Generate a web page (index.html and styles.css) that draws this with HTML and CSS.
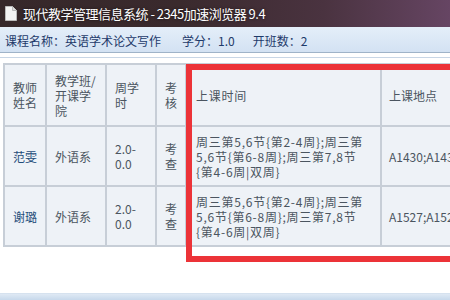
FILE: index.html
```html
<!DOCTYPE html>
<html>
<head>
<meta charset="utf-8">
<link rel="stylesheet" href="styles.css">
</head>
<body>
<div class="titlebar">
  <svg class="doc-icon" width="12" height="15" viewBox="0 0 12 15"><path d="M0.5 0.5h7l4 4v10h-11z" fill="#f4f4f4" stroke="#bbb"/><path d="M7.5 0.5v4h4" fill="#ddd" stroke="#bbb"/></svg>
  <span class="title">现代教学管理信息系统 - 2345加速浏览器 9.4</span>
</div>
<div class="infobar">
  <span>课程名称：英语学术论文写作</span>
  <span class="credit">学分：1.0</span>
  <span class="classes">开班数：2</span>
</div>
<div class="content">
  <div class="table-wrap">
    <table class="grid">
      <colgroup>
        <col class="c1"><col class="c2"><col class="c3"><col class="c4"><col class="c5"><col class="c6">
      </colgroup>
      <tr class="head">
        <td>教师姓名</td>
        <td>教学班/开课学院</td>
        <td>周学时</td>
        <td>考核</td>
        <td class="time">上课时间</td>
        <td class="place">上课地点</td>
      </tr>
      <tr class="row">
        <td class="link">范雯</td>
        <td>外语系</td>
        <td>2.0-0.0</td>
        <td>考查</td>
        <td class="time">周三第5,6节{第2-4周};周三第5,6节{第6-8周};周三第7,8节{第4-6周|双周}</td>
        <td class="place">A1430;A1430;A1430</td>
      </tr>
      <tr class="row">
        <td class="link">谢璐</td>
        <td>外语系</td>
        <td>2.0-0.0</td>
        <td>考查</td>
        <td class="time">周三第5,6节{第2-4周};周三第5,6节{第6-8周};周三第7,8节{第4-6周|双周}</td>
        <td class="place">A1527;A1527;A1527</td>
      </tr>
    </table>
    <div class="highlight"></div>
  </div>
</div>
<div class="bottombar"></div>
</body>
</html>
```

FILE: styles.css
```css
html, body {
  margin: 0;
  padding: 0;
  width: 450px;
  height: 300px;
  overflow: hidden;
  background: #fff;
  font-family: "Noto Sans CJK SC", "Noto Sans", sans-serif;
}
.titlebar {
  height: 27px;
  display: flex;
  align-items: center;
  padding-left: 5px;
  background: linear-gradient(90deg, #36282a 0%, #3a2a2d 40%, #4a3340 72%, #664563 100%);
  color: #fff;
  box-sizing: border-box;
}
.doc-icon {
  flex: none;
  margin-right: 6px;
}
.title {
  font-size: 13px;
  letter-spacing: -0.5px;
  text-shadow: 0 0 3px rgba(0,0,0,0.6);
  white-space: nowrap;
}
.infobar {
  height: 26px;
  box-sizing: border-box;
  display: flex;
  align-items: center;
  padding-left: 5px;
  padding-top: 2px;
  font-size: 12px;
  color: #1e3a6a;
  background: linear-gradient(180deg, #e4eef9 0%, #d3e2f3 100%);
  border-bottom: 1px solid #9fb3c8;
  white-space: nowrap;
}
.credit { margin-left: 21px; }
.classes { margin-left: 18px; }
.content {
  border-top: 1px solid #ffffff;
  padding-top: 3px;
}
.table-wrap {
  position: relative;
  border-top: 1px solid #c8d6e6;
  padding-top: 5px;
  padding-left: 3px;
  height: 225px;
  overflow: hidden;
}
.grid {
  border-collapse: collapse;
  table-layout: fixed;
  width: 520px;
  font-size: 12px;
  line-height: 15px;
  color: #4b5560;
}
.c1 { width: 42px; }
.c2 { width: 60px; }
.c3 { width: 50px; }
.c4 { width: 30px; }
.c5 { width: 195px; }
.c6 { width: 143px; }
.grid td {
  border: 2px solid #c7ced7;
  background: #eef2f7;
  padding: 0 6px 0 8px;
  vertical-align: middle;
  word-break: break-all;
}
.grid td:nth-child(3) { word-break: normal; padding-right: 10px; }
.head td { height: 60px; }
.row td { height: 58px; }
.grid td.time {
  padding-left: 9px;
  padding-right: 8px;
  letter-spacing: 0.75px;
}
.grid td.place { white-space: nowrap; padding-left: 7px; }
.grid td.link { color: #1f4d7a; }
.highlight {
  position: absolute;
  left: 186px;
  top: 6px;
  width: 300px;
  height: 186px;
  border: 6px solid #ec3338;
  pointer-events: none;
}
.bottombar {
  position: absolute;
  left: 0;
  top: 293px;
  width: 450px;
  height: 7px;
  background: linear-gradient(180deg, #dfe9f4 0%, #c3d6ea 100%);
  border-top: 1px solid #d6e2ef;
}
```
